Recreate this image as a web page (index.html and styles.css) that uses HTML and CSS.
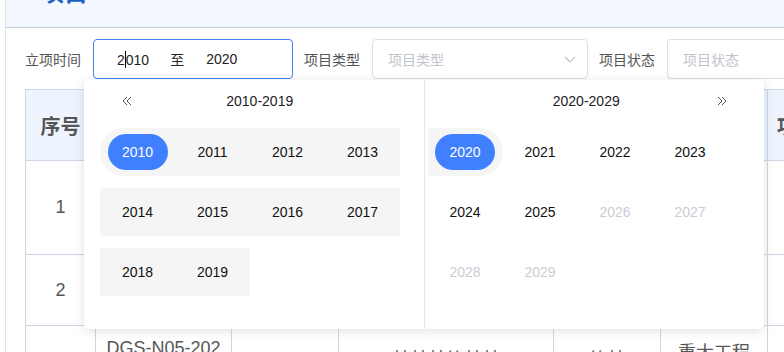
FILE: index.html
```
<!DOCTYPE html>
<html lang="zh-CN">
<head>
    <meta charset="UTF-8">
    <meta name="viewport" content="width=device-width, initial-scale=1.0">
    <title>项目库</title>
    <link rel="stylesheet" href="styles.css">
</head>
<body>

<div class="page">
    <!-- Top bar, title mostly scrolled out of view -->
    <div class="topbar">
        <span class="title">项目</span>
        <span class="subtitle">·</span>
    </div>

    <div class="filters">
        <label class="label">立项时间</label>
        <div class="date-field">
            <div class="date-input">
                <span class="date-val">2<span class="caret"></span>010</span>
                <span class="date-sep">至</span>
                <span class="date-val">2020</span>
            </div>

            <!-- Year range popup -->
            <div class="picker">
                <div class="panel panel-left">
                    <div class="panel-head">
                        <span class="arrow">
                            <svg width="10" height="10" viewBox="0 0 10 10"><path d="M5 1 L1 5 L5 9 M9 1 L5 5 L9 9" fill="none" stroke="#555" stroke-width="1"/></svg>
                        </span>
                        <span class="head-title">2010-2019</span>
                    </div>
                    <div class="years">
                        <div class="year in-range range-start"><span class="pill">2010</span></div>
                        <div class="year in-range">2011</div>
                        <div class="year in-range">2012</div>
                        <div class="year in-range">2013</div>
                        <div class="year in-range">2014</div>
                        <div class="year in-range">2015</div>
                        <div class="year in-range">2016</div>
                        <div class="year in-range">2017</div>
                        <div class="year in-range">2018</div>
                        <div class="year in-range">2019</div>
                    </div>
                </div>
                <div class="panel panel-right">
                    <div class="panel-head">
                        <span class="head-title">2020-2029</span>
                        <span class="arrow">
                            <svg width="10" height="10" viewBox="0 0 10 10"><path d="M1 1 L5 5 L1 9 M5 1 L9 5 L5 9" fill="none" stroke="#555" stroke-width="1"/></svg>
                        </span>
                    </div>
                    <div class="years">
                        <div class="year in-range range-end"><span class="pill">2020</span></div>
                        <div class="year">2021</div>
                        <div class="year">2022</div>
                        <div class="year">2023</div>
                        <div class="year">2024</div>
                        <div class="year">2025</div>
                        <div class="year disabled">2026</div>
                        <div class="year disabled">2027</div>
                        <div class="year disabled">2028</div>
                        <div class="year disabled">2029</div>
                    </div>
                </div>
            </div>
        </div>

        <label class="label">项目类型</label>
        <div class="select">
            <span class="placeholder">项目类型</span>
            <svg class="chevron" width="12" height="7" viewBox="0 0 12 7"><path d="M1 1 L6 6 L11 1" fill="none" stroke="#c0c4cc" stroke-width="1.2"/></svg>
        </div>

        <label class="label">项目状态</label>
        <div class="text-input">
            <span class="placeholder">项目状态</span>
        </div>
    </div>

    <table class="grid">
        <colgroup>
            <col style="width:70px">
            <col style="width:136px">
            <col style="width:107px">
            <col style="width:215px">
            <col style="width:107px">
            <col style="width:107px">
            <col style="width:120px">
        </colgroup>
        <thead>
            <tr class="head-row">
                <th>序号</th>
                <th>项目编号</th>
                <th>项目名称</th>
                <th>建设内容</th>
                <th>项目类型</th>
                <th>项目类别</th>
                <th>项目状态</th>
            </tr>
        </thead>
        <tbody>
            <tr class="row-1">
                <td>1</td><td></td><td></td><td></td><td></td><td></td><td></td>
            </tr>
            <tr class="row-2">
                <td>2</td><td></td><td></td><td></td><td></td><td></td><td></td>
            </tr>
            <tr class="row-3">
                <td></td>
                <td class="top">DGS-N05-202</td>
                <td></td>
                <td class="low">某某某第某某</td>
                <td class="low">第某</td>
                <td class="top">重大工程</td>
                <td></td>
            </tr>
        </tbody>
    </table>
</div>

</body>
</html>
```

FILE: styles.css
```
body {
    margin: 0;
    font-family: "Liberation Sans", "Noto Sans CJK SC", sans-serif;
    font-size: 14px;
    color: #1d2129;
    background: #fff;
    overflow: hidden;
}
.page {
    margin-left: 5px;
    border-left: 1px solid #dfe3ea;
    height: 352px;
}

/* Top bar */
.topbar {
    height: 27px;
    background-color: #f3f7fe;
    border-bottom: 1px solid #c8cfdc;
    overflow: hidden;
    display: flex;
    align-items: flex-start;
}
.title {
    margin: -19px 0 0 34px;
    font-size: 24px;
    font-weight: bold;
    color: #1762c9;
    line-height: 24px;
}
.subtitle {
    margin: -21px 0 0 210px;
    font-size: 20px;
    color: #7aa7e6;
    line-height: 24px;
}

/* Filter row */
.filters {
    display: flex;
    align-items: center;
    padding: 11px 0 0 19px;
    height: 40px;
}
.label {
    color: #555;
    margin-right: 12px;
    white-space: nowrap;
    flex-shrink: 0;
}
.date-field {
    position: relative;
    margin-right: 11px;
    flex-shrink: 0;
}
.date-input {
    box-sizing: border-box;
    width: 200px;
    height: 40px;
    border: 1px solid #4080ff;
    border-radius: 4px;
    display: flex;
    align-items: center;
    padding-left: 23px;
    color: #222;
}
.date-val {
    position: relative;
}
.caret {
    display: inline-block;
    width: 1px;
    height: 17px;
    background: #000;
    vertical-align: -3px;
}
.date-sep {
    margin: 0 22px 0 21px;
    font-family: "Noto Sans CJK SC", sans-serif;
}
.select {
    box-sizing: border-box;
    width: 216px;
    height: 40px;
    border: 1px solid #dcdfe6;
    border-radius: 4px;
    display: flex;
    align-items: center;
    justify-content: space-between;
    padding: 0 11px 0 15px;
    margin-right: 11px;
    flex-shrink: 0;
}
.text-input {
    box-sizing: border-box;
    width: 140px;
    height: 40px;
    border: 1px solid #dcdfe6;
    border-right: none;
    border-radius: 4px 0 0 4px;
    display: flex;
    align-items: center;
    padding-left: 15px;
    flex-shrink: 0;
}
.placeholder {
    color: #c0c4cc;
    font-family: "Noto Sans CJK SC", sans-serif;
}

/* Year range picker */
.picker {
    position: absolute;
    top: 41px;
    left: -9px;
    width: 680px;
    height: 249px;
    background: #fff;
    border-radius: 4px;
    box-shadow: 0 2px 12px rgba(0, 0, 0, 0.12);
    display: flex;
    z-index: 10;
}
.panel {
    width: 340px;
}
.panel-left {
    border-right: 1px solid #e5e6eb;
}
.panel-head {
    height: 42px;
    display: flex;
    align-items: center;
    color: #1d2129;
}
.panel-left .panel-head {
    padding: 0 44px 0 38px;
}
.panel-right .panel-head {
    padding: 0 34px 0 39px;
}
.arrow {
    width: 18px;
    display: flex;
    align-items: center;
}
.panel-right .arrow {
    justify-content: flex-end;
    padding-right: 3px;
}
.head-title {
    flex: 1;
    text-align: center;
}
.years {
    display: grid;
    grid-template-columns: repeat(4, 75px);
    grid-auto-rows: 48px;
    row-gap: 12px;
    margin-top: 6px;
}
.panel-left .years {
    margin-left: 16px;
}
.panel-right .years {
    margin-left: 3px;
}
.year {
    display: flex;
    align-items: center;
    justify-content: center;
    color: #111;
}
.year.in-range {
    background-color: #f5f5f5;
}
.year.range-start {
    border-radius: 24px 0 0 24px;
}
.year.range-end {
    border-radius: 0 24px 24px 0;
}
.year.disabled {
    color: #c9cdd4;
}
.pill {
    width: 60px;
    height: 36px;
    line-height: 36px;
    text-align: center;
    border-radius: 18px;
    background-color: #4080ff;
    color: #fff;
}

/* Table */
.grid {
    margin: 10px 0 0 19px;
    border-collapse: collapse;
    table-layout: fixed;
    width: 862px;
    color: #555;
}
.grid th, .grid td {
    border: 1px solid #cdd6e4;
    text-align: center;
    padding: 0;
    font-family: "Liberation Sans", "Noto Sans CJK SC", sans-serif;
}
.grid th {
    background-color: #eef4fe;
    font-size: 20px;
    font-weight: bold;
    white-space: nowrap;
    overflow: hidden;
}
.grid th:last-child {
    text-align: left;
    padding-left: 9px;
}
.head-row {
    height: 71px;
}
.row-1 {
    height: 94px;
}
.row-2 {
    height: 71px;
}
.grid td {
    font-size: 18px;
}
.row-3 td {
    height: 60px;
    vertical-align: top;
    white-space: nowrap;
    overflow: hidden;
}
.row-3 td.top {
    padding-top: 12px;
}
.row-3 td.low {
    padding-top: 19px;
}
```
